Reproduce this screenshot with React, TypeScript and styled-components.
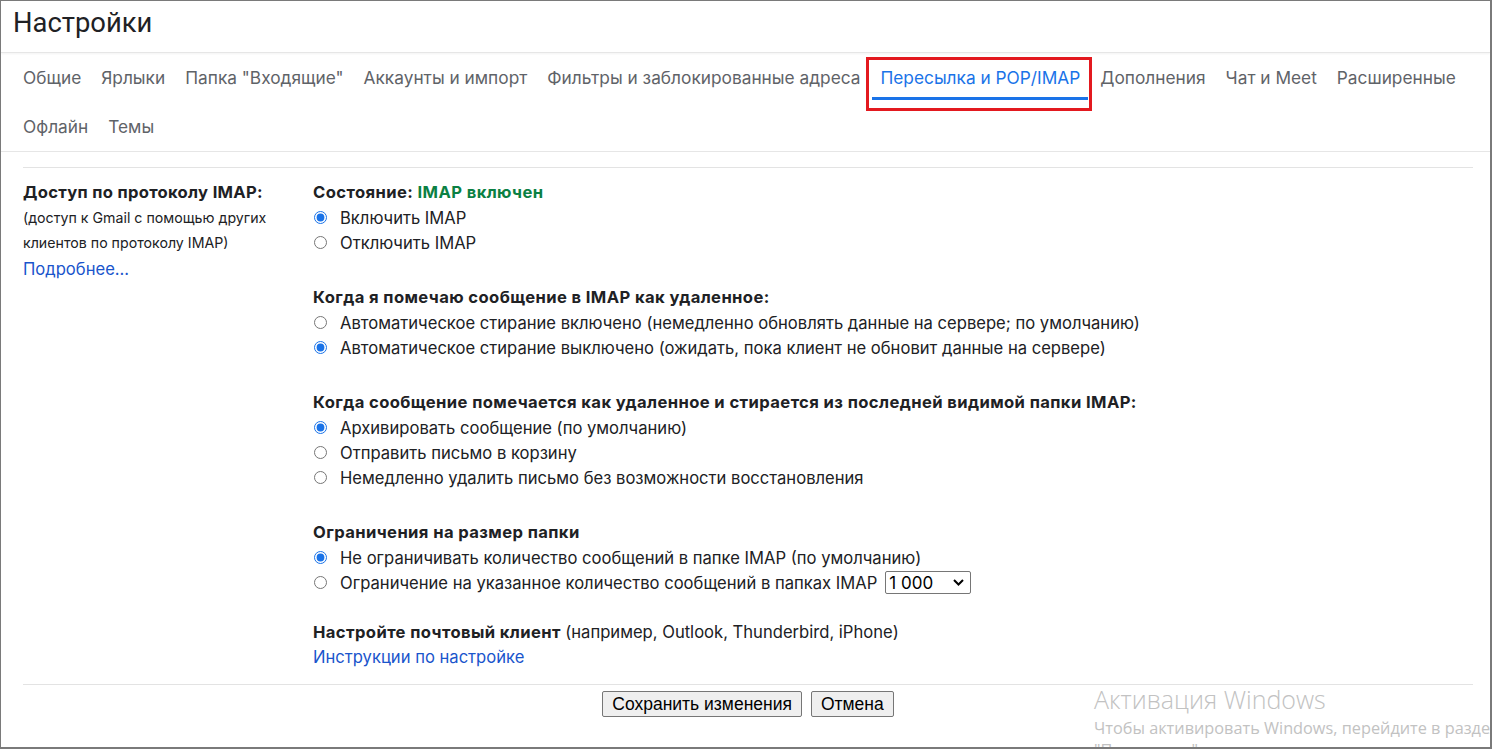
import React from 'react';
import styled, { createGlobalStyle } from 'styled-components';

const Global = createGlobalStyle`
  html, body { margin: 0; padding: 0; background: #fff; }
  body { font-family: Inter, Roboto, "Noto Sans", Arial, sans-serif; color: #202124; }
  * { box-sizing: border-box; }
`;

const Frame = styled.div`
  position: relative;
  width: 1492px;
  height: 749px;
  border-style: solid;
  border-color: #7a7a7a;
  border-width: 1px 2px 2px 1px;
  overflow: hidden;
  display: flex;
  flex-direction: column;
  background: #fff;
`;

const Header = styled.header`
  height: 52px;
  flex: none;
  display: flex;
  align-items: center;
  padding: 0 0 7px 12px;
  border-bottom: 1px solid #e6e6e6;
  box-shadow: 0 1px 2px rgba(0, 0, 0, 0.05);
`;

const Title = styled.h1`
  margin: 0;
  font-family: Roboto, "Noto Sans", sans-serif;
  font-weight: 400;
  font-size: 27.4px;
  color: #202124;
`;

const Nav = styled.nav`
  flex: none;
  padding-left: 14px;
  border-bottom: 1px solid #e6e6e6;
`;

const TabRow = styled.div`
  display: flex;
  gap: 4px;
`;

const Tab = styled.div<{ $active?: boolean }>`
  position: relative;
  height: 47px;
  margin-bottom: 2px;
  padding: 4px 8px 0;
  display: flex;
  align-items: center;
  font-family: Inter, Roboto, sans-serif;
  font-size: 17.3px;
  color: ${(p) => (p.$active ? '#1a73e8' : '#5f6368')};
  border-bottom: 3px solid ${(p) => (p.$active ? '#1a73e8' : 'transparent')};
  white-space: nowrap;
  &::before {
    content: '';
    display: ${(p) => (p.$active ? 'block' : 'none')};
    position: absolute;
    left: -6px;
    right: -4px;
    top: 4px;
    bottom: -14px;
    border: 3px solid #e3191f;
  }
`;

const Body = styled.main`
  padding: 0 17px 0 22px;
  margin-top: 15px;
`;

const Settings = styled.div`
  border-top: 1px solid #e3e3e3;
  border-bottom: 1px solid #e3e3e3;
  padding: 12px 0 14px;
  display: grid;
  grid-template-columns: 290px 1fr;
`;

const Aside = styled.div`
  display: flex;
  flex-direction: column;
`;

const AsideTitle = styled.div`
  font-size: 16.6px;
  font-weight: 700;
  line-height: 25px;
  letter-spacing: 0.3px;
`;

const AsideNote = styled.div`
  font-size: 14.2px;
  line-height: 25px;
  color: #202124;
`;

const Link = styled.a`
  font-size: 16.6px;
  line-height: 25px;
  color: #1a55cc;
  text-decoration: none;
  cursor: pointer;
`;

const AsideLink = styled(Link)`
  margin-top: 2px;
`;

const Options = styled.div`
  display: flex;
  flex-direction: column;
`;

const Group = styled.section<{ $gap?: number }>`
  display: flex;
  flex-direction: column;
  margin-top: ${(p) => p.$gap ?? 0}px;
`;

const GroupTitle = styled.div`
  font-size: 16.6px;
  line-height: 25px;
  font-weight: 700;
  letter-spacing: 0.4px;
`;

const Plain = styled.span`
  font-weight: 400;
  letter-spacing: 0;
`;

const Green = styled.span`
  color: #0b8043;
`;

const Option = styled.label`
  display: flex;
  align-items: center;
  height: 25px;
  font-size: 16.6px;
  color: #202124;
`;

const Radio = styled.input`
  width: 13px;
  height: 13px;
  margin: 0 13px 0 1px;
  accent-color: #1a73e8;
`;

const SelectBox = styled.div`
  margin-left: 8px;
  width: 86px;
  height: 23px;
  border: 1px solid #767676;
  border-radius: 2px;
  display: flex;
  align-items: center;
  justify-content: space-between;
  padding: 0 6px 0 3px;
  font-size: 17px;
  color: #000;
`;

const Footer = styled.div`
  display: flex;
  justify-content: center;
  gap: 9px;
  padding-top: 6px;
`;

const Button = styled.button`
  height: 26px;
  padding: 0 9px;
  font-family: "Liberation Sans", Arial, sans-serif;
  font-size: 17.5px;
  color: #000;
  background: #efefef;
  border: 1px solid #767676;
  border-radius: 2px;
`;

const Watermark = styled.div`
  position: absolute;
  left: 1093px;
  top: 683px;
  color: #c2c2c2;
  font-family: "Open Sans", "Noto Sans", sans-serif;
  pointer-events: none;
  white-space: nowrap;
`;

const WmTitle = styled.div`
  font-size: 25px;
  line-height: 30px;
  font-weight: 300;
  margin-bottom: 3px;
`;

const WmText = styled.div`
  font-size: 16.3px;
  line-height: 22px;
`;

const Chevron = () => (
  <svg width="11" height="7" viewBox="0 0 11 7" fill="none">
    <path d="M1 1l4.5 4.5L10 1" stroke="#000" strokeWidth="2" />
  </svg>
);

const row1 = ['Общие', 'Ярлыки', 'Папка "Входящие"', 'Аккаунты и импорт', 'Фильтры и заблокированные адреса', 'Пересылка и POP/IMAP', 'Дополнения', 'Чат и Meet', 'Расширенные'];
const row2 = ['Офлайн', 'Темы'];

export default function App() {
  return (
    <>
      <Global />
      <Frame>
        <Header>
          <Title>Настройки</Title>
        </Header>
        <Nav>
          <TabRow>
            {row1.map((t) => (
              <Tab key={t} $active={t === 'Пересылка и POP/IMAP'}>{t}</Tab>
            ))}
          </TabRow>
          <TabRow>
            {row2.map((t) => (
              <Tab key={t}>{t}</Tab>
            ))}
          </TabRow>
        </Nav>
        <Body>
          <Settings>
            <Aside>
              <AsideTitle>Доступ по протоколу IMAP:</AsideTitle>
              <AsideNote>(доступ к Gmail с помощью других</AsideNote>
              <AsideNote>клиентов по протоколу IMAP)</AsideNote>
              <AsideLink>Подробнее...</AsideLink>
            </Aside>
            <Options>
              <Group>
                <GroupTitle>
                  Состояние: <Green>IMAP включен</Green>
                </GroupTitle>
                <Option><Radio type="radio" name="imap" defaultChecked />Включить IMAP</Option>
                <Option><Radio type="radio" name="imap" />Отключить IMAP</Option>
              </Group>
              <Group $gap={30}>
                <GroupTitle>Когда я помечаю сообщение в IMAP как удаленное:</GroupTitle>
                <Option><Radio type="radio" name="expunge" />Автоматическое стирание включено (немедленно обновлять данные на сервере; по умолчанию)</Option>
                <Option><Radio type="radio" name="expunge" defaultChecked />Автоматическое стирание выключено (ожидать, пока клиент не обновит данные на сервере)</Option>
              </Group>
              <Group $gap={30}>
                <GroupTitle>Когда сообщение помечается как удаленное и стирается из последней видимой папки IMAP:</GroupTitle>
                <Option><Radio type="radio" name="del" defaultChecked />Архивировать сообщение (по умолчанию)</Option>
                <Option><Radio type="radio" name="del" />Отправить письмо в корзину</Option>
                <Option><Radio type="radio" name="del" />Немедленно удалить письмо без возможности восстановления</Option>
              </Group>
              <Group $gap={30}>
                <GroupTitle>Ограничения на размер папки</GroupTitle>
                <Option><Radio type="radio" name="limit" defaultChecked />Не ограничивать количество сообщений в папке IMAP (по умолчанию)</Option>
                <Option>
                  <Radio type="radio" name="limit" />Ограничение на указанное количество сообщений в папках IMAP
                  <SelectBox>
                    <span>1 000</span>
                    <Chevron />
                  </SelectBox>
                </Option>
              </Group>
              <Group $gap={25}>
                <GroupTitle>
                  Настройте почтовый клиент <Plain>(например, Outlook, Thunderbird, iPhone)</Plain>
                </GroupTitle>
                <Link>Инструкции по настройке</Link>
              </Group>
            </Options>
          </Settings>
          <Footer>
            <Button>Сохранить изменения</Button>
            <Button>Отмена</Button>
          </Footer>
        </Body>
        <Watermark>
          <WmTitle>Активация Windows</WmTitle>
          <WmText>Чтобы активировать Windows, перейдите в раздел</WmText>
          <WmText>"Параметры".</WmText>
        </Watermark>
      </Frame>
    </>
  );
}
